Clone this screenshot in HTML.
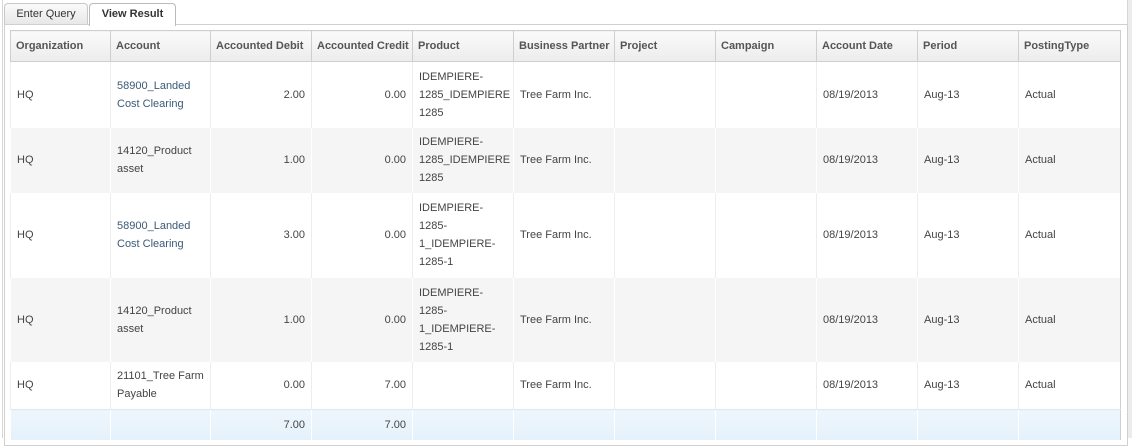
<!DOCTYPE html>
<html><head><style>
body{margin:0;width:1132px;height:438px;overflow:hidden;background:#fff;font-family:"Liberation Sans",Arial,sans-serif;font-size:11px;color:#444;position:relative}
.tab{position:absolute;top:3px;height:20px;border:1px solid #c8c8c8;border-bottom:none;border-radius:4px 4px 0 0;line-height:20px;text-align:center}
#panel{position:absolute;left:4px;top:24px;width:1122px;height:420px;border:1px solid #d0d0d0;background:#fff}
table{position:absolute;left:10px;top:30px;border-collapse:collapse;table-layout:fixed;width:1111px;border-left:1px solid #cfcfcf;border-right:1px solid #cfcfcf}
td,th{padding:0 6px;vertical-align:middle;border-left:1px solid #ededed;line-height:18px;overflow:hidden}
th{height:30px;padding:0 5px;white-space:nowrap;text-align:left;font-weight:bold;color:#555;background:linear-gradient(#fafafa,#ececec);border:1px solid #cfcfcf}
tr.g td{background:#f5f5f5;border-left:1px solid #fff}
tr.f td{background:linear-gradient(#eef6fc,#e4f1fb);border-left:1px solid #fff;border-top:1px solid #dde8f0}
.r{text-align:right}
.a{color:#3a5a78}
</style></head><body>
<div style="position:absolute;left:0;top:0;width:2px;height:438px;border-right:1px solid #d6d6d6"></div>
<div style="position:absolute;right:0;top:0;width:4px;height:438px;background:#ececec;border-left:1px solid #d6d6d6"></div>
<div class="tab" style="left:4px;width:82px;background:linear-gradient(#fafafa,#e8e8e8);color:#333">Enter Query</div>
<div class="tab" style="left:89px;width:85px;top:3px;height:22px;background:#fff;font-weight:bold;color:#333;z-index:2;border-color:#bbb">View Result</div>
<div id="panel"></div>
<table>
<colgroup><col style="width:100px"><col style="width:100px"><col style="width:101px"><col style="width:101px"><col style="width:101px"><col style="width:101px"><col style="width:101px"><col style="width:101px"><col style="width:101px"><col style="width:101px"><col style="width:102px"></colgroup>
<tr><th>Organization</th><th>Account</th><th>Accounted Debit</th><th>Accounted Credit</th><th>Product</th><th>Business Partner</th><th>Project</th><th>Campaign</th><th>Account Date</th><th>Period</th><th>PostingType</th></tr>
<tr style="height:66px"><td>HQ</td><td class="a">58900_Landed Cost Clearing</td><td class="r">2.00</td><td class="r">0.00</td><td>IDEMPIERE-1285_IDEMPIERE 1285</td><td>Tree Farm Inc.</td><td></td><td></td><td>08/19/2013</td><td>Aug-13</td><td>Actual</td></tr>
<tr class="g" style="height:65px"><td>HQ</td><td>14120_Product asset</td><td class="r">1.00</td><td class="r">0.00</td><td>IDEMPIERE-1285_IDEMPIERE 1285</td><td>Tree Farm Inc.</td><td></td><td></td><td>08/19/2013</td><td>Aug-13</td><td>Actual</td></tr>
<tr style="height:85px"><td>HQ</td><td class="a">58900_Landed Cost Clearing</td><td class="r">3.00</td><td class="r">0.00</td><td>IDEMPIERE-1285-1_IDEMPIERE-1285-1</td><td>Tree Farm Inc.</td><td></td><td></td><td>08/19/2013</td><td>Aug-13</td><td>Actual</td></tr>
<tr class="g" style="height:84px"><td>HQ</td><td>14120_Product asset</td><td class="r">1.00</td><td class="r">0.00</td><td>IDEMPIERE-1285-1_IDEMPIERE-1285-1</td><td>Tree Farm Inc.</td><td></td><td></td><td>08/19/2013</td><td>Aug-13</td><td>Actual</td></tr>
<tr style="height:48px"><td>HQ</td><td>21101_Tree Farm Payable</td><td class="r">0.00</td><td class="r">7.00</td><td></td><td>Tree Farm Inc.</td><td></td><td></td><td>08/19/2013</td><td>Aug-13</td><td>Actual</td></tr>
<tr class="f" style="height:30px"><td></td><td></td><td class="r">7.00</td><td class="r">7.00</td><td></td><td></td><td></td><td></td><td></td><td></td><td></td></tr>
</table>
</body></html>
